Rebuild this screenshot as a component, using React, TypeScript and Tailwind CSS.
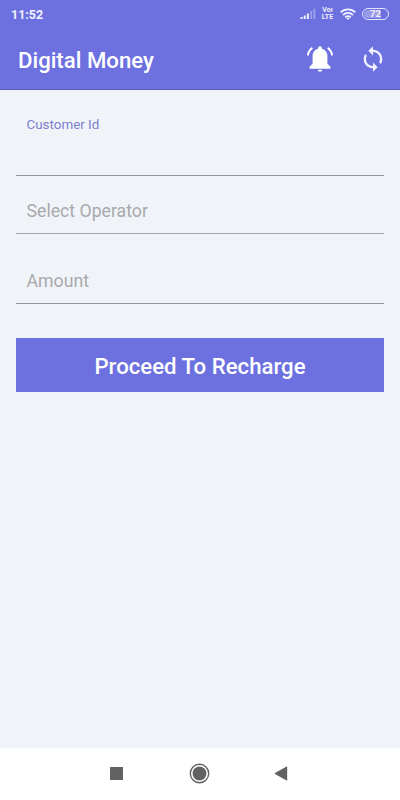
import { MdSync } from "react-icons/md";

const BellIcon = () => (
  <svg className="mr-[25px] h-[28px] w-[28px]" viewBox="0 0 28 28" fill="currentColor">
    <path d="M14 1.2a2 2 0 0 1 2 2v.6c3.4.9 5.4 3.8 5.4 7.4v7.3l3 3.2v2H3.6v-2l3-3.2v-7.3c0-3.6 2-6.5 5.4-7.4v-.6a2 2 0 0 1 2-2z" />
    <path d="M11.8 24.7h4.4a2.2 2 0 0 1-4.4 0z" />
    <path
      d="M1.9 10.4Q2.4 5.8 6.3 2.9M26.1 10.4Q25.6 5.8 21.7 2.9"
      fill="none"
      stroke="currentColor"
      strokeWidth="2"
    />
  </svg>
);

const StatusBar = () => (
  <div className="flex h-[28px] items-center justify-between pl-[11px] pr-[11px] text-[#f1f0ff]">
    <span className="pt-[2px] text-[12.5px] font-bold leading-none">11:52</span>
    <div className="flex items-center">
      <svg className="mr-[5px] h-[12px] w-[16px]" viewBox="0 0 16 12" fill="currentColor">
        <rect x="0.5" y="9" width="2" height="2" />
        <rect x="3.7" y="7.5" width="2" height="3.5" />
        <rect x="6.9" y="5.5" width="2" height="5.5" />
        <rect x="10.1" y="3" width="2" height="8" opacity="0.35" />
        <rect x="13.3" y="0.8" width="2" height="10.2" opacity="0.35" />
      </svg>
      <div className="mr-[6px] flex w-[13px] flex-col items-center text-[7px] font-bold">
        <span className="h-[7px] leading-[7px]">Voı</span>
        <span className="h-[7px] leading-[7px]">LTE</span>
      </div>
      <svg
        className="mr-[6px] h-[12px] w-[16px]"
        viewBox="0 0 16 12"
        fill="none"
        stroke="currentColor"
        strokeWidth="1.8"
      >
        <path d="M0.7 4.4a10.3 10.3 0 0 1 14.6 0" />
        <path d="M3 7a7.1 7.1 0 0 1 10 0" />
        <path d="M5.2 9.3a4 4 0 0 1 5.6 0" />
        <path d="M8 12 6.4 10.3a2.3 2.3 0 0 1 3.2 0z" fill="currentColor" stroke="none" />
      </svg>
      <div className="flex h-[12px] w-[27px] items-center justify-center rounded-full border border-[#e4e2fd] p-px">
        <span className="flex h-full w-full items-center justify-center rounded-full bg-linear-to-r from-white/30 from-72% to-transparent to-72% text-[9.5px] font-bold leading-none">
          72
        </span>
      </div>
    </div>
  </div>
);

const NavBar = () => (
  <div className="flex h-[52px] items-center bg-white pb-[2px] pl-[110px] text-[#626262]">
    <div className="h-[13px] w-[13px] bg-current" />
    <svg className="ml-[66px] h-[21px] w-[21px]" viewBox="0 0 21 21">
      <circle cx="10.5" cy="10.5" r="9.2" fill="none" stroke="currentColor" strokeWidth="1.4" />
      <circle cx="10.5" cy="10.5" r="6.9" fill="currentColor" />
    </svg>
    <svg className="ml-[64px] h-[15px] w-[14px]" viewBox="0 0 14 15" fill="currentColor">
      <path d="M13.2 0.8v13.4q0 0.6-0.6 0.3L1 8q-0.7-0.5 0-1L12.6 0.5q0.6-0.3 0.6 0.3z" />
    </svg>
  </div>
);

export default function App() {
  return (
    <div className="flex h-[800px] w-[400px] flex-col overflow-hidden bg-[#f0f4f8] font-[Roboto,sans-serif]">
      <header className="h-[90px] border-b border-[#5c5fb8] bg-[#6c71df]">
        <StatusBar />
        <div className="flex h-[61px] items-center pl-[18px] pr-[13px] pt-[1px] text-white">
          <h1 className="flex-1 pt-[2px] text-[22.2px] font-medium leading-none">Digital Money</h1>
          <BellIcon />
          <MdSync size={28} className="text-[#f1f0ff]" />
        </div>
      </header>

      <main className="flex-1 px-[16px]">
        <div className="h-[86px] border-b border-[#929399] pl-[10.5px] pt-[26px] text-[13.4px] leading-[17px] text-[#7d7fcf]">
          Customer Id
        </div>
        <div className="h-[58px] border-b border-[#a3a4a9] pl-[10.5px] pt-[25px] text-[17.7px] leading-[20px] text-[#a8a9ad]">
          Select Operator
        </div>
        <div className="h-[70px] border-b border-[#929399] pl-[10.5px] pt-[37px] text-[17.7px] leading-[20px] text-[#a8a9ad]">
          Amount
        </div>
        <button className="mt-[34px] h-[54px] w-full bg-[#6c71df] pt-[4px] text-[22.2px] font-medium text-white">
          Proceed To Recharge
        </button>
      </main>

      <NavBar />
    </div>
  );
}
